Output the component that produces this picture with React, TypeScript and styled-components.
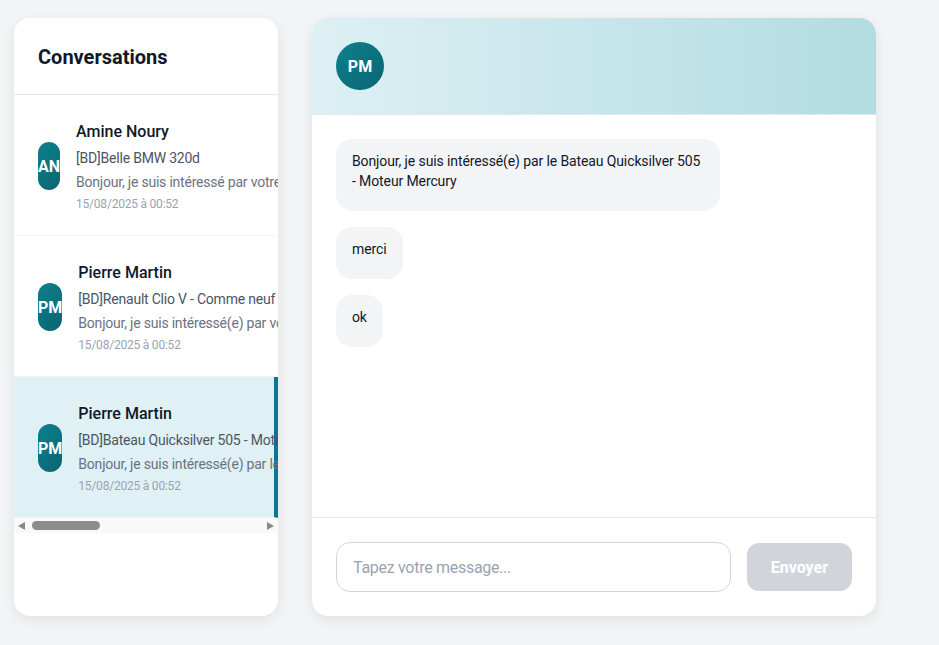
import React from "react";
import styled, { createGlobalStyle } from "styled-components";

const Global = createGlobalStyle`
  * { box-sizing: border-box; }
  html, body { margin: 0; padding: 0; }
  body {
    background: #f3f4f6;
    font-family: Roboto, "Open Sans", sans-serif;
    color: #111827;
  }
`;

const Page = styled.div`
  display: flex;
  align-items: flex-start;
  gap: 34px;
  padding: 18px 14px;
  height: 645px;
`;

const Card = styled.div<{ $w: number }>`
  width: ${(p) => p.$w}px;
  height: 598px;
  background: #ffffff;
  border-radius: 16px;
  box-shadow: 0 4px 14px rgba(0, 0, 0, 0.08);
  overflow: hidden;
  display: flex;
  flex-direction: column;
`;

const ListHeader = styled.div`
  padding: 25px 24px 23px;
  border-bottom: 1px solid #e5e7eb;
`;

const Title = styled.h2`
  margin: 0;
  font-size: 20px;
  line-height: 28px;
  font-weight: 700;
  color: #111827;
`;

const List = styled.div`
  overflow: hidden;
`;

const ScrollBar = styled.div`
  display: flex;
  align-items: center;
  height: 15px;
  background: #f9f9f9;
`;

const Arrow = styled.div<{ $dir: "left" | "right" }>`
  width: 15px;
  height: 15px;
  display: flex;
  align-items: center;
  justify-content: center;
  &::before {
    content: "";
    width: 0;
    height: 0;
    border-top: 4.5px solid transparent;
    border-bottom: 4.5px solid transparent;
    ${(p) =>
      p.$dir === "left"
        ? "border-right: 7px solid #8a8a8a;"
        : "border-left: 7px solid #8a8a8a;"}
  }
`;

const Track = styled.div`
  flex: 1;
  height: 15px;
  display: flex;
  align-items: center;
`;

const Thumb = styled.div`
  margin-left: 3px;
  height: 9px;
  border-radius: 5px;
  background: #8c8c8c;
`;

const Item = styled.div<{ $active?: boolean }>`
  display: flex;
  align-items: center;
  gap: 16px;
  width: 100%;
  padding: 25px 24px 23px;
  border-bottom: 1px solid #f3f4f6;
  background: ${(p) => (p.$active ? "#e0f1f5" : "#ffffff")};
  border-right: 4px solid ${(p) => (p.$active ? "#0e7490" : "transparent")};
`;

const Avatar = styled.div<{ $size: number }>`
  width: ${(p) => p.$size}px;
  height: ${(p) => p.$size}px;
  border-radius: 9999px;
  background: linear-gradient(135deg, #0e808d 0%, #0a6572 100%);
  color: #ffffff;
  font-weight: 700;
  font-size: 16px;
  display: flex;
  align-items: center;
  justify-content: center;
`;

const ItemText = styled.div`
  white-space: nowrap;
`;

const Name = styled.div`
  font-size: 16px;
  line-height: 24px;
  font-weight: 500;
  color: #111827;
`;

const Subject = styled.div`
  margin-top: 4px;
  font-size: 14px;
  line-height: 20px;
  letter-spacing: -0.015em;
  color: #4b5563;
`;

const Preview = styled.div`
  margin-top: 4px;
  font-size: 14px;
  line-height: 20px;
  letter-spacing: -0.015em;
  color: #6b7280;
`;

const Date = styled.div`
  margin-top: 4px;
  font-size: 12px;
  line-height: 16px;
  letter-spacing: -0.018em;
  color: #9ca3af;
`;

const ChatHeader = styled.div`
  padding: 24px;
  background: linear-gradient(90deg, #ddf0f4 0%, #b2dce2 100%);
  border-bottom: 1px solid #e5e7eb;
`;

const Messages = styled.div`
  flex: 1;
  padding: 24px;
  display: flex;
  flex-direction: column;
  align-items: flex-start;
  gap: 16px;
  border-bottom: 1px solid #e5e7eb;
`;

const Bubble = styled.div`
  max-width: 384px;
  background: #f3f4f6;
  border-radius: 16px;
  padding: 12px 16px 20px;
  font-size: 14px;
  line-height: 20px;
  letter-spacing: -0.008em;
  color: #111827;
`;

const Composer = styled.div`
  padding: 24px;
  display: flex;
  align-items: center;
  gap: 16px;
`;

const Input = styled.input`
  flex: 1;
  height: 50px;
  padding: 12px 16px;
  border: 1px solid #d1d5db;
  border-radius: 14px;
  font-family: inherit;
  font-size: 16px;
  letter-spacing: -0.018em;
  color: #111827;
  outline: none;
  &::placeholder { color: #9ca3af; }
`;

const SendButton = styled.button`
  height: 48px;
  padding: 0 24px;
  border: none;
  border-radius: 12px;
  background: #d1d5db;
  color: #ffffff;
  font-family: inherit;
  font-size: 16px;
  font-weight: 700;
`;

const conversations = [
  {
    initials: "AN",
    name: "Amine Noury",
    subject: "[BD]Belle BMW 320d",
    preview:
      "Bonjour, je suis intéressé par votre annonce « Belle BMW 320d ». Est-elle toujours disponible ? Merci d'avance.",
  },
  {
    initials: "PM",
    name: "Pierre Martin",
    subject: "[BD]Renault Clio V - Comme neuf",
    preview: "Bonjour, je suis intéressé(e) par votre Renault Clio V - Comme neuf",
  },
  {
    initials: "PM",
    name: "Pierre Martin",
    subject: "[BD]Bateau Quicksilver 505 - Moteur Mercury",
    preview: "Bonjour, je suis intéressé(e) par le Bateau Quicksilver 505 - Moteur Mercury",
    active: true,
  },
];

export default function App() {
  return (
    <>
      <Global />
      <Page>
        <Card $w={264}>
          <ListHeader>
            <Title>Conversations</Title>
          </ListHeader>
          <List>
            {conversations.map((c, i) => (
              <Item key={i} $active={c.active}>
                <Avatar $size={48}>{c.initials}</Avatar>
                <ItemText>
                  <Name>{c.name}</Name>
                  <Subject>{c.subject}</Subject>
                  <Preview>{c.preview}</Preview>
                  <Date>15/08/2025 à 00:52</Date>
                </ItemText>
              </Item>
            ))}
          </List>
          <ScrollBar>
            <Arrow $dir="left" />
            <Track>
              <Thumb style={{ width: 68 }} />
            </Track>
            <Arrow $dir="right" />
          </ScrollBar>
        </Card>
        <Card $w={564}>
          <ChatHeader>
            <Avatar $size={48}>PM</Avatar>
          </ChatHeader>
          <Messages>
            <Bubble>Bonjour, je suis intéressé(e) par le Bateau Quicksilver 505 - Moteur Mercury</Bubble>
            <Bubble>merci</Bubble>
            <Bubble>ok</Bubble>
          </Messages>
          <Composer>
            <Input placeholder="Tapez votre message..." />
            <SendButton>Envoyer</SendButton>
          </Composer>
        </Card>
      </Page>
    </>
  );
}
